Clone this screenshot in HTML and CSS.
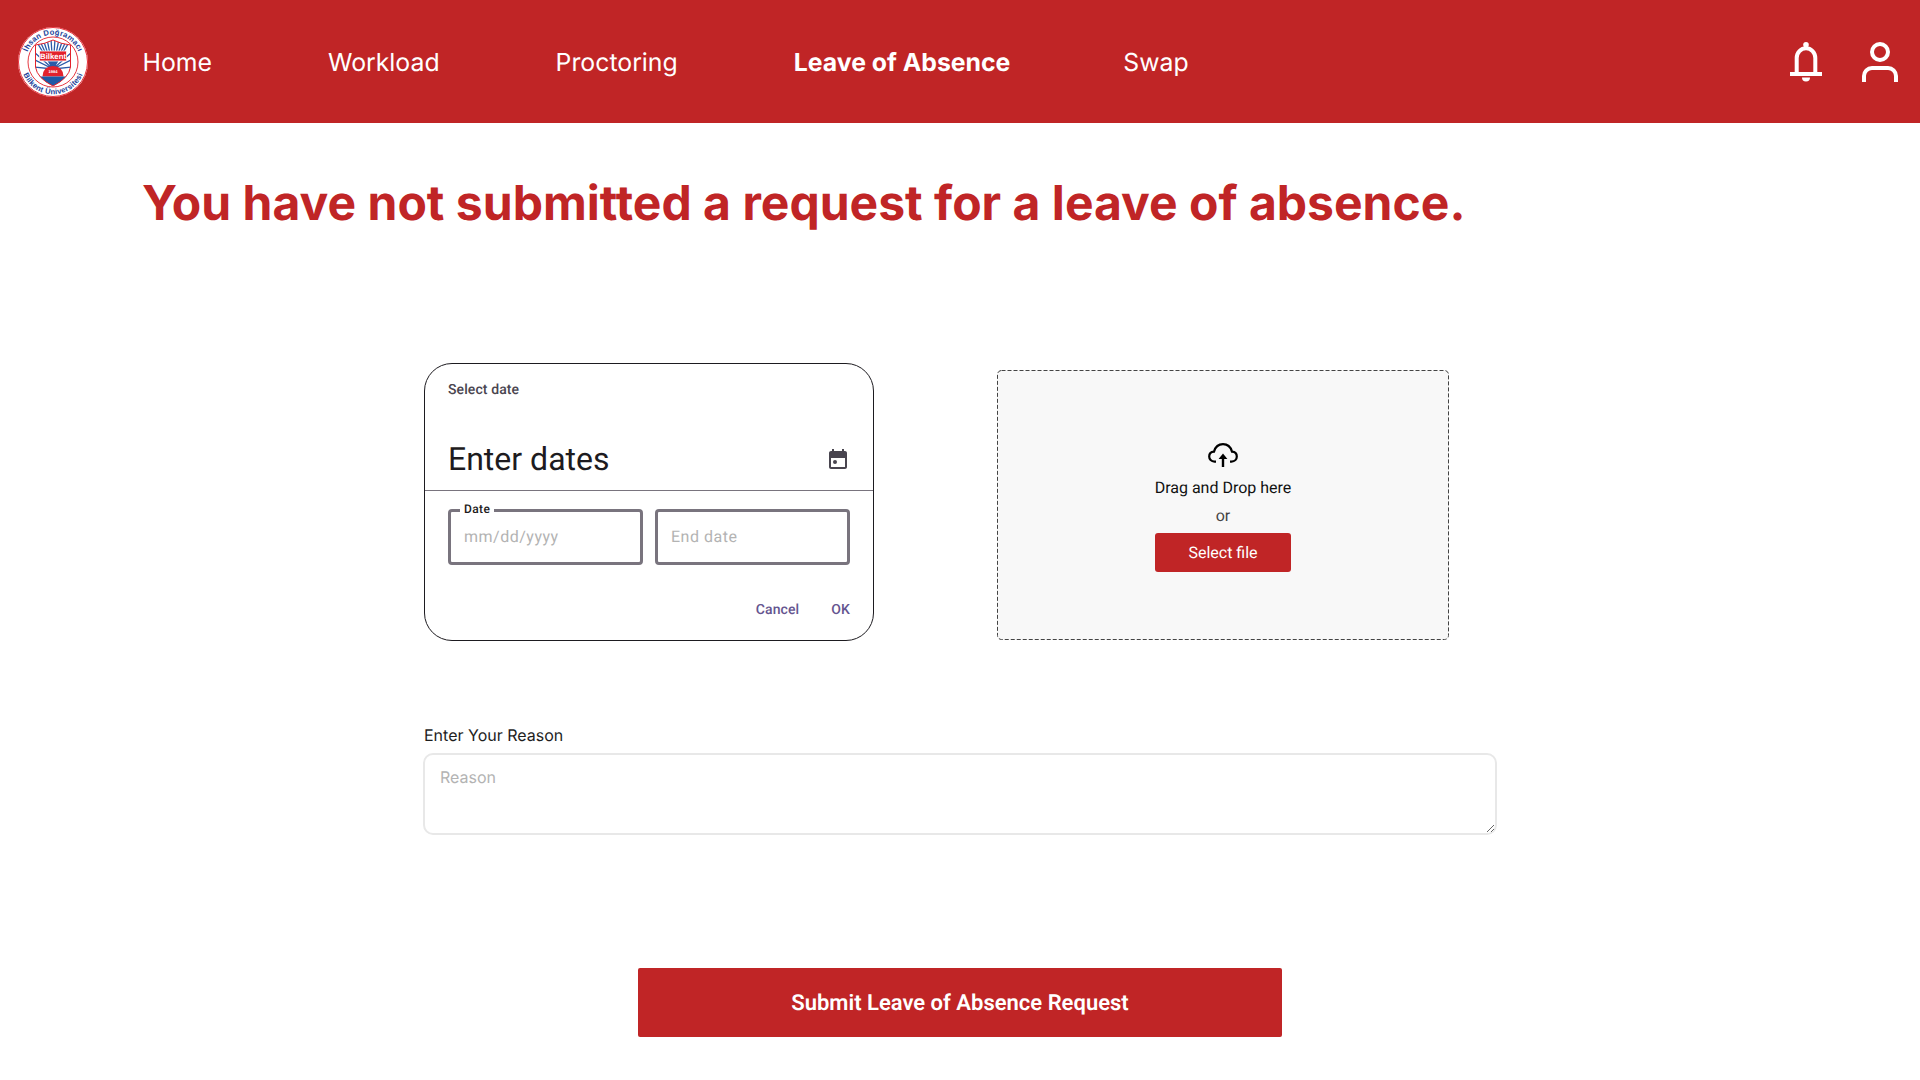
FILE: index.html
```html
<!DOCTYPE html>
<html lang="en">
<head>
<meta charset="utf-8">
<title>Leave of Absence</title>
<link rel="stylesheet" href="styles.css">
</head>
<body>
<header class="topbar">
  <svg class="logo" viewBox="0 0 70 70" aria-label="Bilkent logo">
    <defs>
      <path id="arcTop" d="M8.6 42 A27.3 27.3 0 1 1 61.4 42"/>
      <path id="arcBottom" d="M2.8 35 A32.2 32.2 0 0 0 67.2 35"/>
      <clipPath id="shieldClip"><path d="M17.5 18 Q27 17 35 13 Q43 17 52.5 18 V40 Q51 51 35 59 Q19 51 17.5 40 Z"/></clipPath>
    </defs>
    <circle cx="35" cy="35" r="35" fill="#fff"/>
    <circle cx="35" cy="35" r="34.5" fill="none" stroke="#e8303a" stroke-width="1"/>
    <circle cx="35" cy="35" r="25" fill="none" stroke="#e3222c" stroke-width="0.9"/>
    <text class="logo-text"><textPath href="#arcTop" startOffset="50%" text-anchor="middle">İhsan Doğramacı</textPath></text>
    <text class="logo-text"><textPath href="#arcBottom" startOffset="50%" text-anchor="middle">Bilkent Üniversitesi</textPath></text>
    <path d="M17.5 18 Q27 17 35 13 Q43 17 52.5 18 V40 Q51 51 35 59 Q19 51 17.5 40 Z" fill="#fff"/>
    <g clip-path="url(#shieldClip)">
      <path d="M15 10H55V50H15Z" fill="#fff"/>
      <path d="M35 42L17 12M35 42L21 12M35 42L25 12M35 42L29 12M35 42L33 12M35 42L37 12M35 42L41 12M35 42L45 12M35 42L49 12M35 42L53 12M35 42L15 24M35 42L55 24M35 42L15 32M35 42L55 32M35 42L15 40M35 42L55 40" stroke="#2b5ba8" stroke-width="1.3"/>
      <path d="M24.5 49.5 Q25 39 35 39 Q45 39 45.5 49.5Z" fill="#e3222c"/>
      <path d="M15 49.5H55V62H15Z" fill="#1d5aa6"/>
    </g>
    <path d="M17.5 18 Q27 17 35 13 Q43 17 52.5 18 V40 Q51 51 35 59 Q19 51 17.5 40 Z" fill="none" stroke="#e3222c" stroke-width="1"/>
    <rect x="21.5" y="24" width="27" height="10" rx="1" fill="#e3222c" stroke="#fff" stroke-width="0.8"/>
    <text class="logo-name" x="35" y="31.6" text-anchor="middle">Bilkent</text>
    <text class="logo-year" x="35" y="46" text-anchor="middle">1984</text>
  </svg>
  <nav class="mainnav">
    <a class="navlink" href="#">Home</a>
    <a class="navlink" href="#">Workload</a>
    <a class="navlink" href="#">Proctoring</a>
    <a class="navlink navlink-active" href="#">Leave of Absence</a>
    <a class="navlink navlink-tight" href="#">Swap</a>
  </nav>
  <div class="topicons">
    <svg class="bell" viewBox="0 0 32 40" aria-label="Notifications">
      <circle cx="16" cy="2.8" r="2.8" fill="#fff"/>
      <path d="M6.7 31V16 A9.3 9.8 0 0 1 25.3 16 V31" fill="none" stroke="#fff" stroke-width="4"/>
      <rect x="0" y="30" width="32" height="4" fill="#fff"/>
      <path d="M12 35.6H20A4 4 0 0 1 12 35.6Z" fill="#fff"/>
    </svg>
    <svg class="person" viewBox="0 0 36 40" aria-label="Profile">
      <circle cx="18" cy="10" r="8" fill="none" stroke="#fff" stroke-width="4"/>
      <path d="M2 40V34a8 8 0 0 1 8-8h16a8 8 0 0 1 8 8v6" fill="none" stroke="#fff" stroke-width="4"/>
    </svg>
  </div>
</header>

<main class="page">
  <h1 class="headline">You have not submitted a request for a leave of absence.</h1>
  <div class="column">
    <div class="panels">
      <section class="datecard">
        <div class="datecard-title">Select date</div>
        <div class="datecard-head">
          <span class="datecard-heading">Enter dates</span>
          <svg class="calicon" viewBox="0 0 24 24"><path fill="#49454f" d="M19 3h-1V1h-2v2H8V1H6v2H5C3.9 3 3 3.9 3 5v14c0 1.1.9 2 2 2h14c1.1 0 2-.9 2-2V5c0-1.1-.9-2-2-2zm0 16H5v-9h14v9z"/><circle cx="9" cy="14" r="2" fill="#49454f"/></svg>
        </div>
        <div class="datecard-fields">
          <div class="field">
            <span class="field-label">Date</span>
            <input class="field-input" type="text" placeholder="mm/dd/yyyy">
          </div>
          <div class="field">
            <input class="field-input" type="text" placeholder="End date">
          </div>
        </div>
        <div class="datecard-actions">
          <button class="textbtn" type="button">Cancel</button>
          <button class="textbtn" type="button">OK</button>
        </div>
      </section>
      <section class="dropzone">
        <svg class="dropzone-border" aria-hidden="true"><rect class="dropzone-dash" x="0.5" y="0.5" rx="4" ry="4"/></svg>
        <svg class="cloud" viewBox="0 0 30 24" aria-hidden="true">
          <path d="M8 18.6H6.5C3.2 18.6 1.2 16.3 1.2 13.5C1.2 10.8 3.2 8.8 6 8.6C7.2 4.5 10.5 1.2 15 1.2C19.5 1.2 22.8 4.5 24 8.6C26.8 8.8 28.8 10.8 28.8 13.5C28.8 16.3 26.8 18.6 23.5 18.6H22" fill="none" stroke="#000" stroke-width="2.2"/>
          <path d="M15 24V13" stroke="#000" stroke-width="2.4"/>
          <path d="M10.6 16L15 10.4L19.4 16Z" fill="#000"/>
        </svg>
        <div class="drop-title">Drag and Drop here</div>
        <div class="drop-or">or</div>
        <button class="filebtn" type="button">Select file</button>
      </section>
    </div>
    <label class="reason-label" for="reason">Enter Your Reason</label>
    <textarea class="reason-input" id="reason" placeholder="Reason"></textarea>
    <button class="submitbtn" type="button">Submit Leave of Absence Request</button>
  </div>
</main>
</body>
</html>
```
FILE: styles.css
```css
* { box-sizing: border-box; }
html, body { margin: 0; padding: 0; }
body { background: #fff; font-family: "Inter", "Liberation Sans", sans-serif; color: #1e1e1e; height: 1080px; overflow: hidden; text-rendering: geometricPrecision; }

.topbar { display: flex; align-items: center; height: 123px; background: #c02526; padding: 0 22px 0 18px; }
.logo { width: 70px; height: 70px; flex: none; }
.logo-text { font: 700 7.6px "Liberation Sans", sans-serif; fill: #1a3f9a; letter-spacing: 0.25px; }
.logo-name { font: 700 7.8px "Liberation Sans", sans-serif; fill: #fff; }
.logo-year { font: 700 4px "Liberation Sans", sans-serif; fill: #fff; }
.mainnav { display: flex; align-items: center; gap: 116px; margin-left: 54.5px; padding-top: 1px; }
.navlink { color: #fff; text-decoration: none; font-size: 24.8px; font-weight: 400; line-height: 32px; }
.navlink-active { font-weight: 700; }
.navlink-tight { margin-left: -3px; }
.topicons { display: flex; align-items: center; gap: 40px; margin-left: auto; }
.bell { width: 32px; height: 40px; display: block; }
.person { width: 36px; height: 40px; display: block; }

.page { padding: 0; }
.headline { margin: 51px 0 0 142px; font-size: 48px; line-height: 58px; font-weight: 700; letter-spacing: 0.02px; color: #c02526; }
.column { width: 1072px; margin: 0 auto; padding-top: 131px; display: flex; flex-direction: column; align-items: stretch; }

.panels { display: flex; align-items: flex-start; justify-content: space-between; width: 1025px; }
.datecard { width: 450px; height: 278px; border: 1.5px solid #1d1b20; border-radius: 28px; padding: 16px 0 0; background: #fff; font-family: "Roboto", sans-serif; }
.datecard-title { margin-left: 23px; font-size: 14px; font-weight: 500; line-height: 20px; letter-spacing: 0.1px; color: #49454f; }
.datecard-head { display: flex; align-items: center; justify-content: space-between; height: 91px; padding: 37px 23px 10px; border-bottom: 1px solid #79747e; }
.datecard-heading { font-size: 32px; line-height: 40px; color: #1d1b20; }
.calicon { width: 24px; height: 24px; flex: none; margin-top: 2px; }
.datecard-fields { display: flex; gap: 12px; padding: 18px 23px 0; }
.field { position: relative; flex: 1; height: 56px; border: 3px solid #79747e; border-radius: 4px; }
.field-label { position: absolute; top: -11px; left: 9px; padding: 0 4px; background: #fff; font-size: 12px; line-height: 16px; letter-spacing: 0.4px; font-weight: 500; color: #1d1b20; }
.field-input { width: 100%; height: 100%; border: 0; outline: 0; padding: 0 13px 2px; background: transparent; font: 400 16px "Roboto", sans-serif; letter-spacing: 0.5px; text-rendering: geometricPrecision; }
.field-input::placeholder { color: #b3b3b3; opacity: 1; }
.datecard-actions { display: flex; justify-content: flex-end; gap: 32px; padding: 35px 23px 0; }
.textbtn { border: 0; background: none; padding: 0; font: 500 14px/20px "Roboto", sans-serif; letter-spacing: 0.1px; color: #65558f; text-rendering: geometricPrecision; }

.dropzone { position: relative; width: 452px; height: 270px; margin-top: 7px; display: flex; flex-direction: column; align-items: center; padding-top: 73px; background: #f8f8f8; border-radius: 4px; font-family: "Roboto", sans-serif; }
.dropzone-border { position: absolute; top: 0; left: 0; width: 100%; height: 100%; }
.dropzone-dash { width: calc(100% - 1px); height: calc(100% - 1px); fill: none; stroke: #444; stroke-width: 1; stroke-dasharray: 4 2; }
.cloud { width: 30px; height: 24px; display: block; }
.drop-title { margin-top: 9px; font-size: 16px; line-height: 24px; color: #111; }
.drop-or { margin-top: 6px; font-size: 16px; line-height: 20px; color: #444; }
.filebtn { position: relative; margin-top: 7px; width: 136px; height: 39px; border: 0; border-radius: 3px; background: #c02526; color: #fff; font: 400 16px "Roboto", sans-serif; text-rendering: geometricPrecision; }

.reason-label { margin-top: 83px; font-size: 16px; line-height: 22px; color: #1e1e1e; }
.reason-input { display: block; width: 1074px; height: 82px; margin: 7px 0 0 -1px; padding: 12px 15px; border: 2px solid #e8e8e8; border-radius: 10px; outline: 0; background: #fff; font: 400 16px "Inter", sans-serif; text-rendering: geometricPrecision; }
.reason-input::placeholder { color: #b3b3b3; opacity: 1; }
.submitbtn { align-self: center; width: 644px; height: 69px; margin-top: 133px; padding-top: 2px; border: 0; border-radius: 2px; background: #c02526; color: #fff; font: 600 22px "Roboto", sans-serif; text-rendering: geometricPrecision; }
```
